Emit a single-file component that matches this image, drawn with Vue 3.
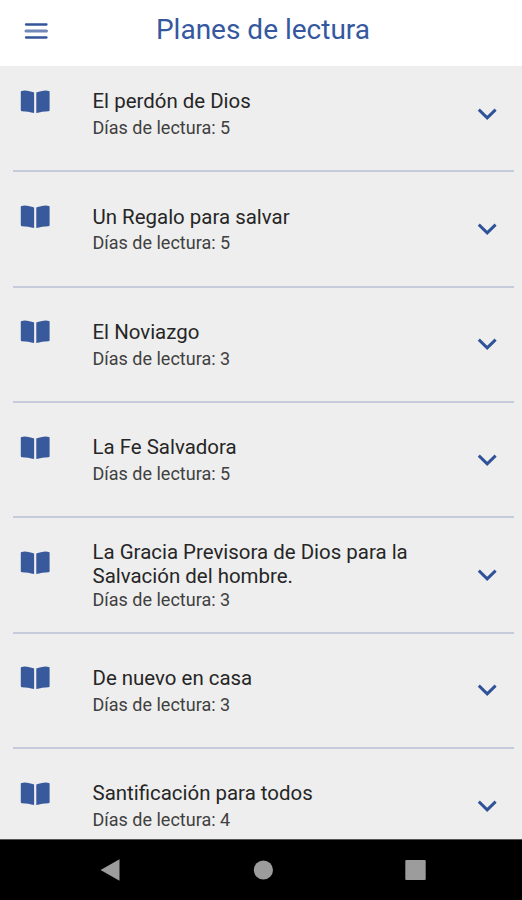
<template>
  <div class="screen">
    <header class="toolbar">
      <button class="menu-button" type="button" aria-label="Menú">
        <svg width="24" height="18" viewBox="0 0 24 18">
          <path class="bar" d="M2 2.5h20.5M2 15.5h20.5" />
          <path class="bar bar-middle" d="M2 9h20.5" />
        </svg>
      </button>
      <h1 class="toolbar-title">Planes de lectura</h1>
    </header>

    <main class="content">
      <ul class="plan-list">
        <li v-for="plan in plans" :key="plan.name" class="plan" @click="toggle(plan)">
          <svg class="plan-book" width="30" height="24" viewBox="0 0 30 24">
            <path d="M1.6 0.9L4.5 0.6C8 0.9 11 1.5 14.1 2.5V23.1C10.5 22 6 21.3 2 21.2Q0.8 21.2 0.8 20V1.7Q0.8 1 1.6 0.9Z" />
            <path d="M28.8 0.9L25.9 0.6C22.4 0.9 19.4 1.5 16.3 2.5V23.1C19.9 22 24.4 21.3 28.4 21.2Q29.6 21.2 29.6 20V1.7Q29.6 1 28.8 0.9Z" />
          </svg>
          <div class="plan-text">
            <h2 class="plan-name">{{ plan.name }}</h2>
            <p class="plan-days">Días de lectura: {{ plan.days }}</p>
          </div>
          <svg
            class="plan-arrow"
            :class="{ 'is-open': opened === plan.name }"
            width="20"
            height="12"
            viewBox="0 0 20 12"
          >
            <path d="M1.8 1.6L10.2 9.9L18.6 1.6" />
          </svg>
        </li>
      </ul>
    </main>

    <nav class="system-nav">
      <svg width="20" height="24" viewBox="0 0 20 24"><path d="M0.5 12L19.5 1.2V22.8Z" /></svg>
      <svg width="20" height="20" viewBox="0 0 20 20"><circle cx="10.4" cy="10" r="9.6" /></svg>
      <svg width="21" height="20" viewBox="0 0 21 20"><rect x="0.3" width="20.4" height="20" rx="1" /></svg>
    </nav>
  </div>
</template>

<script setup>
import { ref } from 'vue'

const plans = [
  { name: 'El perdón de Dios', days: 5 },
  { name: 'Un Regalo para salvar', days: 5 },
  { name: 'El Noviazgo', days: 3 },
  { name: 'La Fe Salvadora', days: 5 },
  { name: 'La Gracia Previsora de Dios para la Salvación del hombre.', days: 3 },
  { name: 'De nuevo en casa', days: 3 },
  { name: 'Santificación para todos', days: 4 }
]

const opened = ref('')

function toggle(plan) {
  opened.value = opened.value === plan.name ? '' : plan.name
}
</script>

<style>
body {
  margin: 0;
}
</style>

<style scoped>
.screen {
  display: flex;
  flex-direction: column;
  height: 100vh;
  overflow: hidden;
  background: #eeeeee;
  font-family: Roboto, "Liberation Sans", sans-serif;
}

.toolbar {
  display: grid;
  grid-template-columns: 72px 1fr 68px;
  align-items: center;
  flex-shrink: 0;
  height: 66px;
  padding-bottom: 6px;
  box-sizing: border-box;
  background: #fff;
}

.menu-button {
  display: flex;
  padding: 1px 0 0 24px;
  border: 0;
  background: none;
}

.bar {
  stroke: #35559b;
  stroke-width: 2.3;
  stroke-linecap: round;
}

.bar-middle {
  stroke: #7188b9;
  stroke-width: 3;
}

.toolbar-title {
  margin: 0;
  color: #35589f;
  font-size: 28px;
  font-weight: 400;
  line-height: 34px;
  text-align: center;
}

.content {
  flex: 1;
  min-height: 0;
  overflow: hidden;
}

.plan-list {
  margin: -9px 0 0;
  padding: 0 8px 0 13px;
  list-style: none;
}

.plan {
  display: flex;
  align-items: center;
  height: 115.33px;
  box-sizing: border-box;
  border-bottom: 2px solid #c5cbdb;
}

.plan-book {
  align-self: flex-start;
  flex-shrink: 0;
  margin: 32.6px 42.5px 0 7px;
  fill: #39599d;
}

.plan-text {
  flex: 1;
  padding-right: 40px;
}

.plan-name {
  min-height: 27.5px;
  margin: 0;
  color: #262626;
  font-size: 20.45px;
  font-weight: 400;
  line-height: 24.3px;
}

.plan-days {
  margin: 0;
  color: #404040;
  font-size: 18px;
  line-height: 21px;
}

.plan-arrow {
  flex-shrink: 0;
  margin-right: 17px;
  fill: none;
  stroke: #2f5299;
  stroke-width: 2.9;
}

.plan-arrow.is-open {
  transform: rotate(180deg);
}

.system-nav {
  display: flex;
  align-items: center;
  justify-content: space-between;
  flex-shrink: 0;
  height: 61px;
  padding: 0 96px 0 100px;
  box-sizing: border-box;
  border-top: 1px solid #555;
  background: #000;
  fill: #9c9c9c;
}
</style>
